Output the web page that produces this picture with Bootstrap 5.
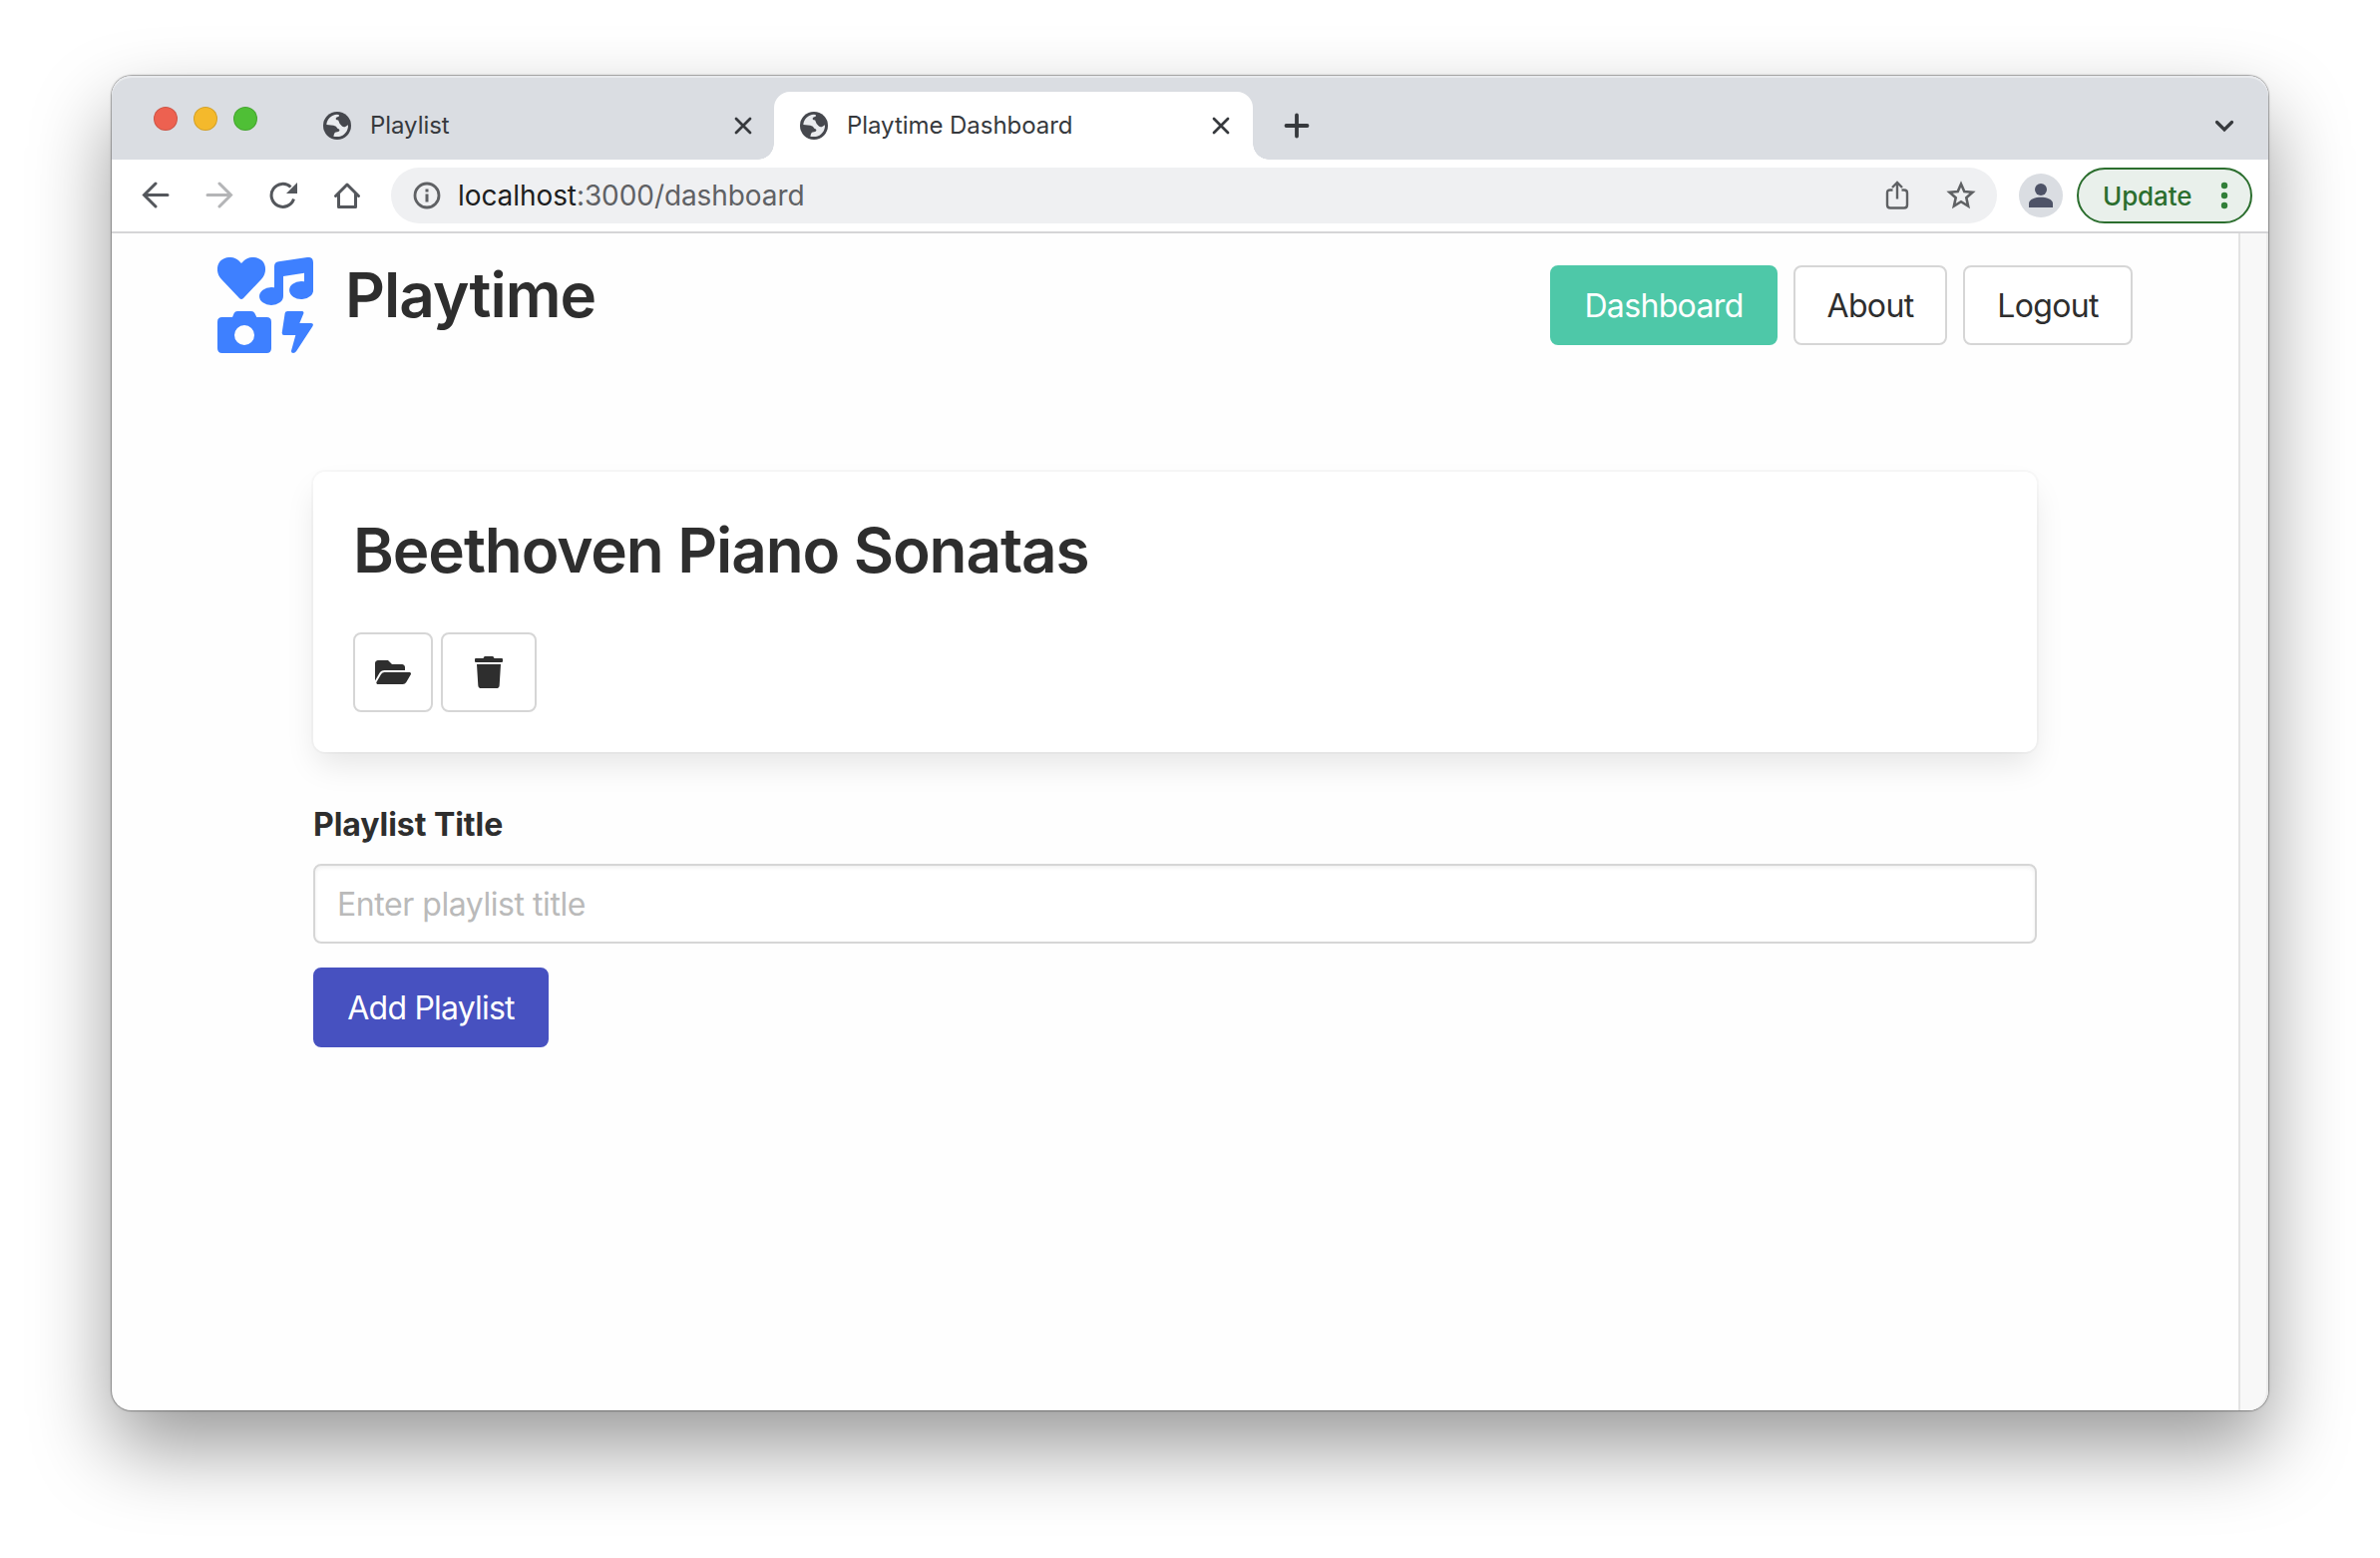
<!DOCTYPE html>
<html lang="en">
<head>
<meta charset="utf-8">
<title>Playtime Dashboard</title>
<link rel="stylesheet" href="https://cdn.jsdelivr.net/npm/bootstrap@5.3.0/dist/css/bootstrap.min.css">
<style>
  body { font-family: Inter, "Liberation Sans", sans-serif; font-size: 32px; color: #2e2e2e; background: #fff; padding: 76px 112px 148px; height: 1562px; overflow: hidden; letter-spacing: -.5px; }
  svg { display: block; flex: none; }
  .window { height: 1338px; border-radius: 20px; background: #fefefe; box-shadow: 0 0 0 1px rgba(0,0,0,.22), 0 0 3px rgba(0,0,0,.3), 0 38px 80px rgba(0,0,0,.4); }
  .strip { height: 84px; background: #dadde2; border-radius: 20px 20px 0 0; box-shadow: inset 0 2px 0 #e8eaed; padding-left: 42px; }
  .lights { gap: 16px; padding-top: 7px; height: 79px; }
  .light { width: 24px; height: 24px; border-radius: 50%; border: 1px solid rgba(0,0,0,.13); }
  .red { background: #ed6150; } .amber { background: #f4b92c; } .green { background: #4fbf36; }
  .tab { height: 68px; margin-top: 16px; font-size: 24px; letter-spacing: -.05px; color: #36393d; }
  .tab svg { color: #46484e; }
  .tab-icon { margin-right: 15px; }
  .tab-idle { width: 518px; padding: 0 22px 0 66px; }
  .tab-open { width: 480px; padding: 0 23px 0 26px; background: #fff; border-radius: 16px 16px 0 0; position: relative; }
  .tab-open::before, .tab-open::after { content: ""; position: absolute; bottom: 0; width: 16px; height: 16px; }
  .tab-open::before { left: -16px; background: radial-gradient(circle at 0 0, transparent 15.5px, #fff 16px); }
  .tab-open::after { right: -16px; background: radial-gradient(circle at 100% 0, transparent 15.5px, #fff 16px); }
  .toolbar { height: 74px; background: #fff; border-bottom: 2px solid #d5d5d7; padding: 0 16px 0 30px; color: #54575c; }
  .navset { gap: 36px; width: 250px; }
  .omnibox { height: 56px; border-radius: 28px; background: #eff0f2; padding: 0 21px 0 21px; font-size: 28px; letter-spacing: -.08px; color: #5f6164; margin-right: 22px; }
  .omnibox b { font-weight: 400; color: #1d1e20; }
  .avatar { width: 44px; height: 44px; border-radius: 50%; background: #dadde2; margin-right: 14px; }
  .update { width: 176px; height: 56px; border: 2px solid #2b6e2e; border-radius: 28px; background: #e9f0eb; color: #2b6e2e; font-size: 26px; font-weight: 500; padding: 0 18px 0 24px; letter-spacing: -.1px; }
  .viewport { height: 1180px; }
  .gutter { width: 30px; border-left: 2px solid #e3e3e3; border-right: 2px solid #ececec; background: #f8f8f8; border-radius: 0 0 20px 0; }
  .site-head { padding: 24px 106px 0; height: 120px; }
  .site-head h1, .playlist h2 { font-size: 62px; font-weight: 600; line-height: 76px; margin: 0; }
  .site-head h1 { letter-spacing: -.95px; padding-left: 32px; }
  .playlist h2 { letter-spacing: -1.1px; }
  .btn { --bs-btn-font-size: 32px; --bs-btn-line-height: 46px; --bs-btn-border-width: 2px; --bs-btn-border-radius: 8px; --bs-btn-padding-x: 0; height: 80px; padding-top: 16px; padding-bottom: 14px; letter-spacing: -.65px; white-space: nowrap; }
  .btn-plain { --bs-btn-color: #2e2e2e; --bs-btn-bg: #fff; --bs-btn-border-color: #d6d6d6; }
  .btn-teal { --bs-btn-color: #fff; --bs-btn-bg: #4ec8a8; --bs-btn-border-color: #4ec8a8; }
  .btn-indigo { --bs-btn-color: #fff; --bs-btn-bg: #4751c0; --bs-btn-border-color: #4751c0; width: 236px; letter-spacing: -.8px; }
  .w-dash { width: 228px; } .w-about { width: 154px; } .w-logout { width: 170px; } .w-open { width: 80px; } .w-trash { width: 96px; }
  .w-open, .w-trash { padding-top: 15px; padding-bottom: 15px; }
  .dash { padding: 119px 202px 0; }
  .playlist { height: 281px; border-radius: 12px; padding: 41px 40px 39px; background: #fff; box-shadow: 0 16px 32px -4px rgba(10,10,10,.1), 0 0 0 2px rgba(10,10,10,.025); }
  .actions { margin-top: 44px; }
  .form-label { font-weight: 700; line-height: 48px; margin: 49px 0 15px; letter-spacing: -.05px; }
  .form-control, .form-control::placeholder { letter-spacing: -.45px; }
  .form-control { height: 80px; font-size: 32px; border: 2px solid #d6d6d6; border-radius: 8px; padding: 1px 22px 0; box-shadow: inset 0 2px 4px rgba(10,10,10,.06); margin-bottom: 24px; }
  .form-control::placeholder { color: #bababa; }
</style>
</head>
<body>
<svg width="0" height="0" class="position-absolute">
  <symbol id="globe" viewBox="18 18 84 84"><circle cx="60" cy="60" r="42" fill="currentColor"/><path fill="#e9ebee" d="M28 57C29 41 42 28 60 26.500L66 27.500Q67 33 61 34Q55 35 56 40Q57 44 63 43L65 47Q67 56 74 61Q80 66 86 62L93 58C94 76 81 91 66 93Q55 94 49 92L51 85Q52 79 60 79Q68 78 67 72Q65 69 61 68Q58 60 49 59Z"/></symbol>
  <symbol id="cross" viewBox="0 0 18 18"><path d="M2 2l14 14M16 2L2 16" fill="none" stroke="#36393d" stroke-width="2.800" stroke-linecap="round"/></symbol>
</svg>
<div class="window d-flex flex-column">
  <div class="strip d-flex">
    <div class="lights d-flex align-items-center"><span class="light red"></span><span class="light amber"></span><span class="light green"></span></div>
    <div class="tab tab-idle d-flex align-items-center"><svg width="28" height="28" class="tab-icon"><use href="#globe"/></svg><span class="ps-1 flex-grow-1">Playlist</span><svg width="18" height="18"><use href="#cross"/></svg></div>
    <div class="tab tab-open d-flex align-items-center"><svg width="28" height="28" class="tab-icon"><use href="#globe"/></svg><span class="ps-1 flex-grow-1">Playtime Dashboard</span><svg width="18" height="18"><use href="#cross"/></svg></div>
    <div class="tab d-flex align-items-center flex-grow-1 justify-content-between"><svg class="ms-4" width="40" height="26" viewBox="-7 0 40 26"><path d="M13 2.500v21M2.500 13h21" stroke="#36393d" stroke-width="3.800" stroke-linecap="round"/></svg><svg class="me-4" width="36" height="18" viewBox="0 0 36 18"><path d="M8.500 5.500L16 13L23.500 5.500" fill="none" stroke="#36393d" stroke-width="3.200" stroke-linecap="round"/></svg></div>
  </div>
  <div class="toolbar d-flex align-items-center">
    <div class="navset d-flex align-items-center">
      <svg width="28" height="28" viewBox="0 0 28 28"><path d="M26 13.500H3M14 2L2.500 13.500L14 25" fill="none" stroke="currentColor" stroke-width="3" stroke-linecap="round"/></svg>
      <svg width="28" height="28" viewBox="0 0 28 28"><path d="M2 13.500H25M14 2L25.500 13.500L14 25" fill="none" stroke="#b4b5b7" stroke-width="3" stroke-linecap="round"/></svg>
      <svg width="28" height="28" viewBox="0 0 28 28"><path d="M24.500 17.500A11.500 11.500 0 1 1 21.500 5.500" fill="none" stroke="currentColor" stroke-width="3"/><path d="M28 1V12H17Z" fill="currentColor"/></svg>
      <svg width="28" height="28" viewBox="0 0 28 28"><path d="M2.500 14.500L14 3L25.500 14.500M5.500 12V25.500H22.500V12" fill="none" stroke="currentColor" stroke-width="3" stroke-linejoin="round" stroke-linecap="round"/></svg>
    </div>
    <div class="omnibox d-flex align-items-center flex-grow-1">
      <svg width="30" height="28" viewBox="0 0 28 28"><circle cx="14" cy="14" r="12" fill="none" stroke="currentColor" stroke-width="2.800"/><path d="M14 12.500V20.500M14 7.500V10.500" stroke="currentColor" stroke-width="3"/></svg>
      <span class="ps-3 flex-grow-1"><b>localhost</b>:3000/dashboard</span>
      <svg width="24" height="30" viewBox="0 0 24 30"><path d="M7.500 9.500H5Q2 9.500 2 12.500V24.500Q2 27.500 5 27.500H19Q22 27.500 22 24.500V12.500Q22 9.500 19 9.500H16.500M12 18.500V2.500M7 7L12 2L17 7" fill="none" stroke="currentColor" stroke-width="2.400"/></svg>
      <svg class="ms-4" width="43" height="30" viewBox="-13 0 43 30"><path d="M15 3.500L18.300 11.100L26.500 11.800L20.300 17.300L22.100 25.500L15 21.200L7.900 25.500L9.700 17.300L3.500 11.800L11.700 11.100Z" fill="none" stroke="currentColor" stroke-width="2.600"/></svg>
    </div>
    <div class="avatar d-flex align-items-center justify-content-center"><svg width="24" height="24" viewBox="0 0 24 24"><circle cx="12" cy="6" r="6" fill="#4e5367"/><path d="M0 24V20C0 15.500 7 13.700 12 13.700S24 15.500 24 20V24Z" fill="#4e5367"/></svg></div>
    <div class="update d-flex align-items-center justify-content-between"><span>Update</span><svg width="16" height="28" viewBox="0 0 16 28" fill="#317e38"><circle cx="8" cy="4" r="3.200"/><circle cx="8" cy="14" r="3.200"/><circle cx="8" cy="24" r="3.200"/></svg></div>
  </div>
  <div class="viewport d-flex">
    <main class="flex-grow-1">
      <header class="site-head d-flex align-items-start">
        <svg width="96" height="96" viewBox="0 0 288 288" fill="#3e80ff"><path d="M66 123L12 66C-4 49-4 24 10 10C26-4 50-3 64 10L72 18L80 10C94-3 118-4 134 10C148 24 148 49 132 66L78 123Q72 129 66 123Z"/><path d="M288 16V96A36 27 0 1 1 252 72Q257 72 261 73V47L198 57V117A36 27 0 1 1 162 90Q167 90 171 91V28Q171 15 184 13L270 0Q288-2 288 16Z"/><path fill-rule="evenodd" d="M14 180H45L50 168Q53 162 60 162H102Q109 162 112 168L118 180H148Q162 180 162 194V274Q162 288 148 288H14Q0 288 0 274V194Q0 180 14 180ZM81 204A30 30 0 1 0 81 264A30 30 0 1 0 81 204Z"/><path d="M211 162H253Q261 162 259 169L247 198H282Q291 199 286 208L237 283Q233 288 228 288Q221 287 222 281L235 234H200Q194 234 194 227L203 168Q204 162 211 162Z"/></svg>
        <h1>Playtime</h1>
        <nav class="d-flex gap-3 ms-auto pt-2">
          <a class="btn btn-teal w-dash">Dashboard</a><a class="btn btn-plain w-about">About</a><a class="btn btn-plain w-logout">Logout</a>
        </nav>
      </header>
      <section class="dash">
        <div class="playlist">
          <h2>Beethoven Piano Sonatas</h2>
          <div class="actions d-flex gap-2">
            <button class="btn btn-plain w-open d-flex align-items-center justify-content-center"><svg width="36" height="32" viewBox="0 0 576 512" fill="currentColor"><path d="M572.694 292.093L500.270 416.248A63.997 63.997 0 0 1 444.989 448H45.025c-18.523 0-30.064-20.093-20.731-36.093l72.424-124.155A64 64 0 0 1 152 256h399.964c18.523 0 30.064 20.093 20.730 36.093zM152 224h328v-48c0-26.510-21.490-48-48-48H272l-64-64H48C21.490 64 0 85.490 0 112v278.046l69.077-118.418C86.214 242.250 117.989 224 152 224z"/></svg></button>
            <button class="btn btn-plain w-trash d-flex align-items-center justify-content-center"><svg width="28" height="32" viewBox="0 0 448 512" fill="currentColor"><path d="M432 32H312l-9.400-18.700A24 24 0 0 0 281.100 0H166.800a23.720 23.720 0 0 0-21.400 13.300L136 32H16A16 16 0 0 0 0 48v32a16 16 0 0 0 16 16h416a16 16 0 0 0 16-16V48a16 16 0 0 0-16-16zM53.200 467a48 48 0 0 0 47.900 45h245.800a48 48 0 0 0 47.900-45L416 128H32z"/></svg></button>
          </div>
        </div>
        <form>
          <label class="form-label d-block" for="playlist-title">Playlist Title</label>
          <input class="form-control" id="playlist-title" placeholder="Enter playlist title">
          <button type="button" class="btn btn-indigo">Add Playlist</button>
        </form>
      </section>
    </main>
    <div class="gutter"></div>
  </div>
</div>
<script src="https://cdn.jsdelivr.net/npm/bootstrap@5.3.0/dist/js/bootstrap.bundle.min.js"></script>
</body>
</html>
